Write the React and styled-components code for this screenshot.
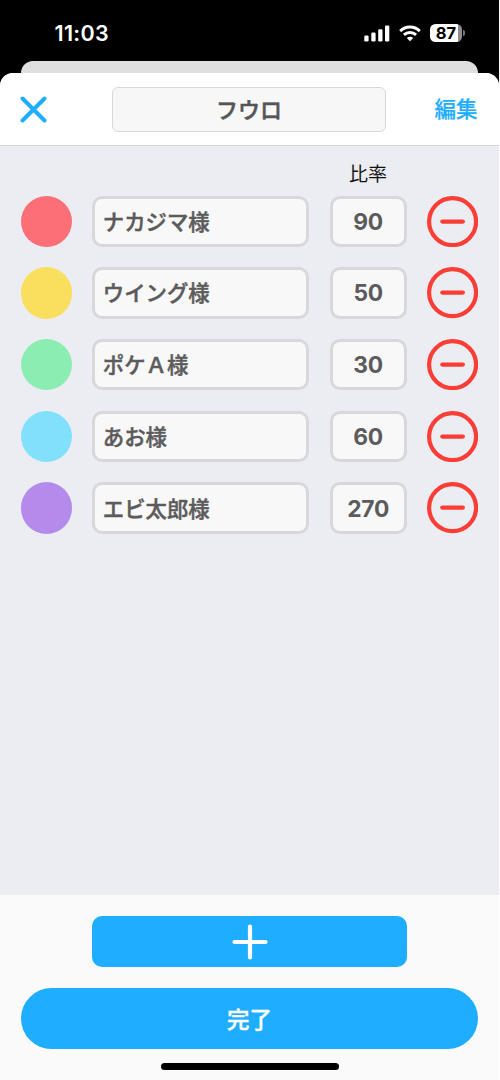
import React from 'react';
import styled, { createGlobalStyle } from 'styled-components';

const GlobalStyle = createGlobalStyle`
  * {
    box-sizing: border-box;
  }

  body {
    margin: 0;
    background: #fff;
    font-family: Inter, "Noto Sans CJK JP", sans-serif;
  }

  button, input {
    font-family: inherit;
    padding: 0;
    margin: 0;
  }
`;

const Screen = styled.div`
  width: 499px;
  height: 1080px;
  display: flex;
  flex-direction: column;
  overflow: hidden;
  background: #000;
`;

const StatusBar = styled.div`
  flex: none;
  height: 60.5px;
  padding: 6px 34px 0 54.5px;
  display: flex;
  align-items: center;
  justify-content: space-between;
  color: #fff;
`;

const Clock = styled.span`
  font-size: 21.5px;
  font-weight: 600;
  line-height: 26px;
  letter-spacing: 0.3px;
`;

const StatusIcons = styled.div`
  display: flex;
  align-items: center;
  gap: 9px;

  svg {
    display: block;
  }
`;

const Battery = styled.div`
  display: flex;
  align-items: center;
  gap: 1px;
`;

const BatteryBody = styled.div`
  width: 32px;
  height: 18px;
  border-radius: 5.5px;
  background: linear-gradient(to right, #fff 87%, #8d8d8d 87%);
  color: #000;
  font-size: 16.5px;
  font-weight: 700;
  line-height: 19px;
  text-align: center;
`;

const BatteryTip = styled.div`
  width: 2px;
  height: 6px;
  border-radius: 0 2px 2px 0;
  background: #777;
`;

const BackSheet = styled.div`
  flex: none;
  height: 12.5px;
  margin: 0 21px;
  border-radius: 12px 12px 0 0;
  background: #dfdfdf;
`;

const Sheet = styled.div`
  flex: 1;
  display: flex;
  flex-direction: column;
  overflow: hidden;
  border-radius: 13px 13px 0 0;
  background: #ecedf3;
`;

const Header = styled.header`
  flex: none;
  height: 73px;
  padding: 0 21px 0 20px;
  display: flex;
  align-items: center;
  justify-content: space-between;
  border-bottom: 1px solid #d6d6da;
  background: #fff;
`;

const IconButton = styled.button`
  display: block;
  border: none;
  background: none;

  svg {
    display: block;
  }
`;

const CloseButton = styled(IconButton)`
  width: 44px;
`;

const EditButton = styled.button`
  width: 44px;
  border: none;
  background: none;
  color: #1eadff;
  font-size: 21.5px;
  font-weight: 500;
  line-height: 28px;
  white-space: nowrap;
  -webkit-text-stroke: 0.2px #1eadff;
`;

const TitleInput = styled.input`
  width: 274px;
  height: 45px;
  padding-bottom: 2px;
  border: 1.3px solid #d8d8d8;
  border-radius: 6px;
  background: #f7f7f7;
  color: #555;
  font-size: 22px;
  font-weight: 500;
  text-align: center;
  -webkit-text-stroke: 0.5px #555;
`;

const List = styled.main`
  flex: 1;
  padding: 15px 21px 0;
`;

const Columns = styled.div`
  display: grid;
  grid-template-columns: 51px 217px 77px 52px;
  column-gap: 20.3px;
  align-items: center;
`;

const RatioLabel = styled.span`
  grid-column: 3;
  color: #111;
  font-size: 19px;
  line-height: 28px;
  text-align: center;
`;

const Rows = styled.div`
  margin-top: 6.7px;
  display: flex;
  flex-direction: column;
  gap: 20.5px;
`;

const Swatch = styled.div`
  width: 51.2px;
  height: 51.2px;
  border-radius: 50%;
  background: ${props => props.$color};
`;

const Field = styled.input`
  width: 100%;
  height: 51.2px;
  padding: ${props => (props.$center ? '0' : '0 7.5px 2px')};
  border: 3px solid #d8d8dc;
  border-radius: 10px;
  background: #f8f8f8;
  color: #5b5b5b;
  font-size: ${props => (props.$center ? '22.8px' : '21.4px')};
  font-weight: ${props => (props.$center ? 700 : 500)};
  letter-spacing: ${props => (props.$center ? '-0.3px' : 'normal')};
  text-align: ${props => (props.$center ? 'center' : 'left')};
  -webkit-text-stroke: ${props => (props.$center ? '0' : '0.45px #5b5b5b')};
`;

const Footer = styled.footer`
  flex: none;
  height: 185px;
  padding: 21px 21px 0;
  display: flex;
  flex-direction: column;
  align-items: center;
  background: #fafafa;
`;

const AddButton = styled.button`
  width: 314.5px;
  height: 51px;
  display: flex;
  align-items: center;
  justify-content: center;
  border: none;
  border-radius: 10px;
  background: #1eadff;
`;

const DoneButton = styled.button`
  width: 100%;
  height: 61px;
  margin-top: 21px;
  padding-bottom: 1px;
  border: none;
  border-radius: 31px;
  background: #1eadff;
  color: #fff;
  font-size: 22.5px;
  font-weight: 500;
  -webkit-text-stroke: 0.4px #fff;
`;

const HomeIndicator = styled.div`
  width: 178px;
  height: 6.5px;
  margin-top: 14px;
  border-radius: 4px;
  background: #000;
`;

const SignalIcon = () => (
  <svg width="26" height="17" viewBox="0 0 26 17" fill="#fff">
    <rect x="0.3" y="10.5" width="4.3" height="6" rx="1.3" />
    <rect x="7.3" y="7.5" width="4.3" height="9" rx="1.3" />
    <rect x="14.2" y="4.2" width="4.3" height="12.3" rx="1.3" />
    <rect x="21" y="0.5" width="4.3" height="16" rx="1.3" />
  </svg>
);

const WifiIcon = () => (
  <svg width="22" height="17" viewBox="0 0 22 17" fill="none" stroke="#fff" strokeWidth="2.9">
    <path d="M1.2 6.1C6.7 .7 15.3 .7 20.8 6.1" />
    <path d="M4.9 9.9C8.4 6.6 13.6 6.6 17.1 9.9" />
    <path d="M11 16.3L7.8 13C9.6 11.4 12.4 11.4 14.2 13Z" fill="#fff" stroke="none" />
  </svg>
);

const CloseIcon = () => (
  <svg width="27" height="27" viewBox="0 0 27 27" stroke="#1eadff" strokeWidth="4" strokeLinecap="round">
    <path d="M2.5 2.5L24.5 24.5M24.5 2.5L2.5 24.5" />
  </svg>
);

const MinusIcon = () => (
  <svg width="51.2" height="51.2" viewBox="0 0 51.2 51.2" fill="none" stroke="#f93e35" strokeWidth="4.2" strokeLinecap="round">
    <circle cx="25.6" cy="25.6" r="23.5" />
    <path d="M15.3 25.6H35.9" />
  </svg>
);

const PlusIcon = () => (
  <svg width="36" height="36" viewBox="0 0 36 36" stroke="#fff" strokeWidth="4.2" strokeLinecap="round">
    <path d="M2.5 18H33.5M18 2.5V33.5" />
  </svg>
);

class App extends React.Component {
  constructor(props) {
    super(props);
    this.state = {
      title: 'フウロ',
      members: [
        { id: 1, color: '#fc6f76', name: 'ナカジマ様', ratio: '90' },
        { id: 2, color: '#fade5e', name: 'ウイング様', ratio: '50' },
        { id: 3, color: '#8cedb2', name: 'ポケＡ様', ratio: '30' },
        { id: 4, color: '#81e1fc', name: 'あお様', ratio: '60' },
        { id: 5, color: '#b48beb', name: 'エビ太郎様', ratio: '270' }
      ]
    }
  }

  handleChange = (id, key, value) => {
    this.setState(({ members }) => ({
      members: members.map(m => (m.id === id ? { ...m, [key]: value } : m))
    }))
  }

  handleRemove = (id) => {
    this.setState(({ members }) => ({
      members: members.filter(m => m.id !== id)
    }))
  }

  handleAdd = () => {
    this.setState(({ members }) => ({
      members: [...members, { id: Date.now(), color: '#fc6f76', name: '', ratio: '' }]
    }))
  }

  render() {
    return (
      <Screen>
        <GlobalStyle />
        <StatusBar>
          <Clock>11:03</Clock>
          <StatusIcons>
            <SignalIcon />
            <WifiIcon />
            <Battery>
              <BatteryBody>87</BatteryBody>
              <BatteryTip />
            </Battery>
          </StatusIcons>
        </StatusBar>
        <BackSheet />
        <Sheet>
          <Header>
            <CloseButton><CloseIcon /></CloseButton>
            <TitleInput
              value={this.state.title}
              onChange={e => this.setState({ title: e.target.value })}
            />
            <EditButton>編集</EditButton>
          </Header>
          <List>
            <Columns>
              <RatioLabel>比率</RatioLabel>
            </Columns>
            <Rows>
              {this.state.members.map(m => (
                <Columns key={m.id}>
                  <Swatch $color={m.color} />
                  <Field value={m.name} onChange={e => this.handleChange(m.id, 'name', e.target.value)} />
                  <Field $center value={m.ratio} onChange={e => this.handleChange(m.id, 'ratio', e.target.value)} />
                  <IconButton onClick={() => this.handleRemove(m.id)}><MinusIcon /></IconButton>
                </Columns>
              ))}
            </Rows>
          </List>
          <Footer>
            <AddButton onClick={this.handleAdd}><PlusIcon /></AddButton>
            <DoneButton>完了</DoneButton>
            <HomeIndicator />
          </Footer>
        </Sheet>
      </Screen>
    );
  }

}

export default App;
